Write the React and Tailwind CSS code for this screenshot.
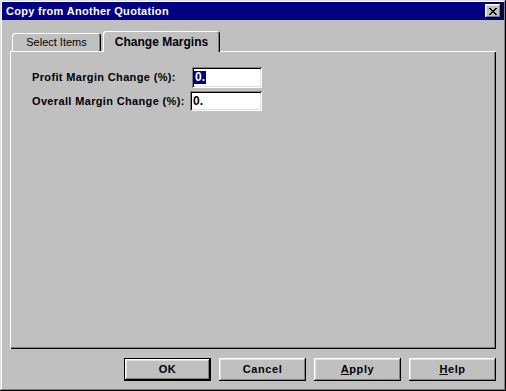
import React from 'react'

const raised =
  'shadow-[inset_-1px_-1px_#000,inset_1px_1px_#fff,inset_-2px_-2px_#808080,inset_2px_2px_#dfdfdf]'
const sunken =
  'shadow-[inset_1px_1px_#808080,inset_-1px_-1px_#fff,inset_2px_2px_#000,inset_-2px_-2px_#dfdfdf]'

const Button = ({ children, isDefault }) => (
  <button
    className={`w-[87px] h-[23px] bg-[#c0c0c0] font-bold text-black tracking-[0.6px] flex items-center justify-center ${
      isDefault
        ? 'shadow-[inset_0_0_0_1px_#000,inset_-2px_-2px_#000,inset_2px_2px_#fff,inset_-3px_-3px_#808080,inset_3px_3px_#dfdfdf]'
        : raised
    }`}
  >
    {children}
  </button>
)

const Field = ({ label, labelWidth, inputWidth, height, selected }) => (
  <div className="flex items-center">
    <div className="font-bold text-black tracking-[0.35px]" style={{ width: labelWidth }}>
      {label}
    </div>
    <div
      className={`bg-white flex items-center pl-[2px] ${sunken}`}
      style={{ width: inputWidth, height }}
    >
      <span className={`font-bold text-[12px] leading-[13px] px-[1px] ${selected ? 'bg-[#000080] text-white' : 'text-black'}`}>
        0.
      </span>
    </div>
  </div>
)

export default function App() {
  return (
    <div
      className="w-[506px] h-[391px] bg-[#c0c0c0] p-[2px] flex flex-col text-[11px] font-['Liberation_Sans',Arial,sans-serif] shadow-[inset_-1px_-1px_#000,inset_1px_1px_#dfdfdf,inset_-2px_-2px_#808080,inset_2px_2px_#fff]"
    >
      {/* Title bar */}
      <div className="h-[18px] bg-[#000080] flex items-center justify-between pl-[4px] pr-[3px]">
        <span className="text-white font-bold leading-none tracking-[0.3px]">Copy from Another Quotation</span>
        <button className={`w-[16px] h-[14px] bg-[#c0c0c0] flex items-center justify-center ${raised}`}>
          <svg width="8" height="7" viewBox="0 0 8 7" shapeRendering="crispEdges">
            <path d="M0 0h2v1h-2zM6 0h2v1h-2zM1 1h2v1h-2zM5 1h2v1h-2zM2 2h4v1h-4zM3 3h2v1h-2zM2 4h4v1h-4zM1 5h2v1h-2zM5 5h2v1h-2zM0 6h2v1h-2zM6 6h2v1h-2z" fill="#000" />
          </svg>
        </button>
      </div>

      {/* Tabs */}
      <div className="mt-[11px] mx-[8px]">
        <div className="h-[20px] flex items-end pl-[2px]">
          <div className="w-[89px] h-[18px] rounded-t-[3px] flex items-center justify-center text-black shadow-[inset_1px_1px_#fff,inset_-1px_0_#000,inset_-2px_0_#808080]">
            Select Items
          </div>
          <div className="relative z-10 ml-[2px] -mb-[1px] w-[117px] h-[21px] bg-[#c0c0c0] rounded-t-[3px] flex items-center justify-center font-bold text-black text-[12px] shadow-[inset_1px_1px_#fff,inset_-1px_0_#000,inset_-2px_0_#808080]">
            Change Margins
          </div>
        </div>
        <div className="h-[298px] pt-[16px] pl-[22px] flex flex-col gap-[3px] shadow-[inset_1px_1px_#fff,inset_-1px_-1px_#000,inset_-2px_-2px_#808080]">
          <Field label="Profit Margin Change (%):" labelWidth={160} inputWidth={70} height={21} selected />
          <Field label="Overall Margin Change (%):" labelWidth={158} inputWidth={72} height={20} />
        </div>
      </div>

      {/* Buttons */}
      <div className="mt-[9px] mr-[8px] flex justify-end gap-[8px]">
        <Button isDefault>OK</Button>
        <Button>Cancel</Button>
        <Button>
          <span className="underline">A</span>pply
        </Button>
        <Button>
          <span className="underline">H</span>elp
        </Button>
      </div>
    </div>
  )
}
